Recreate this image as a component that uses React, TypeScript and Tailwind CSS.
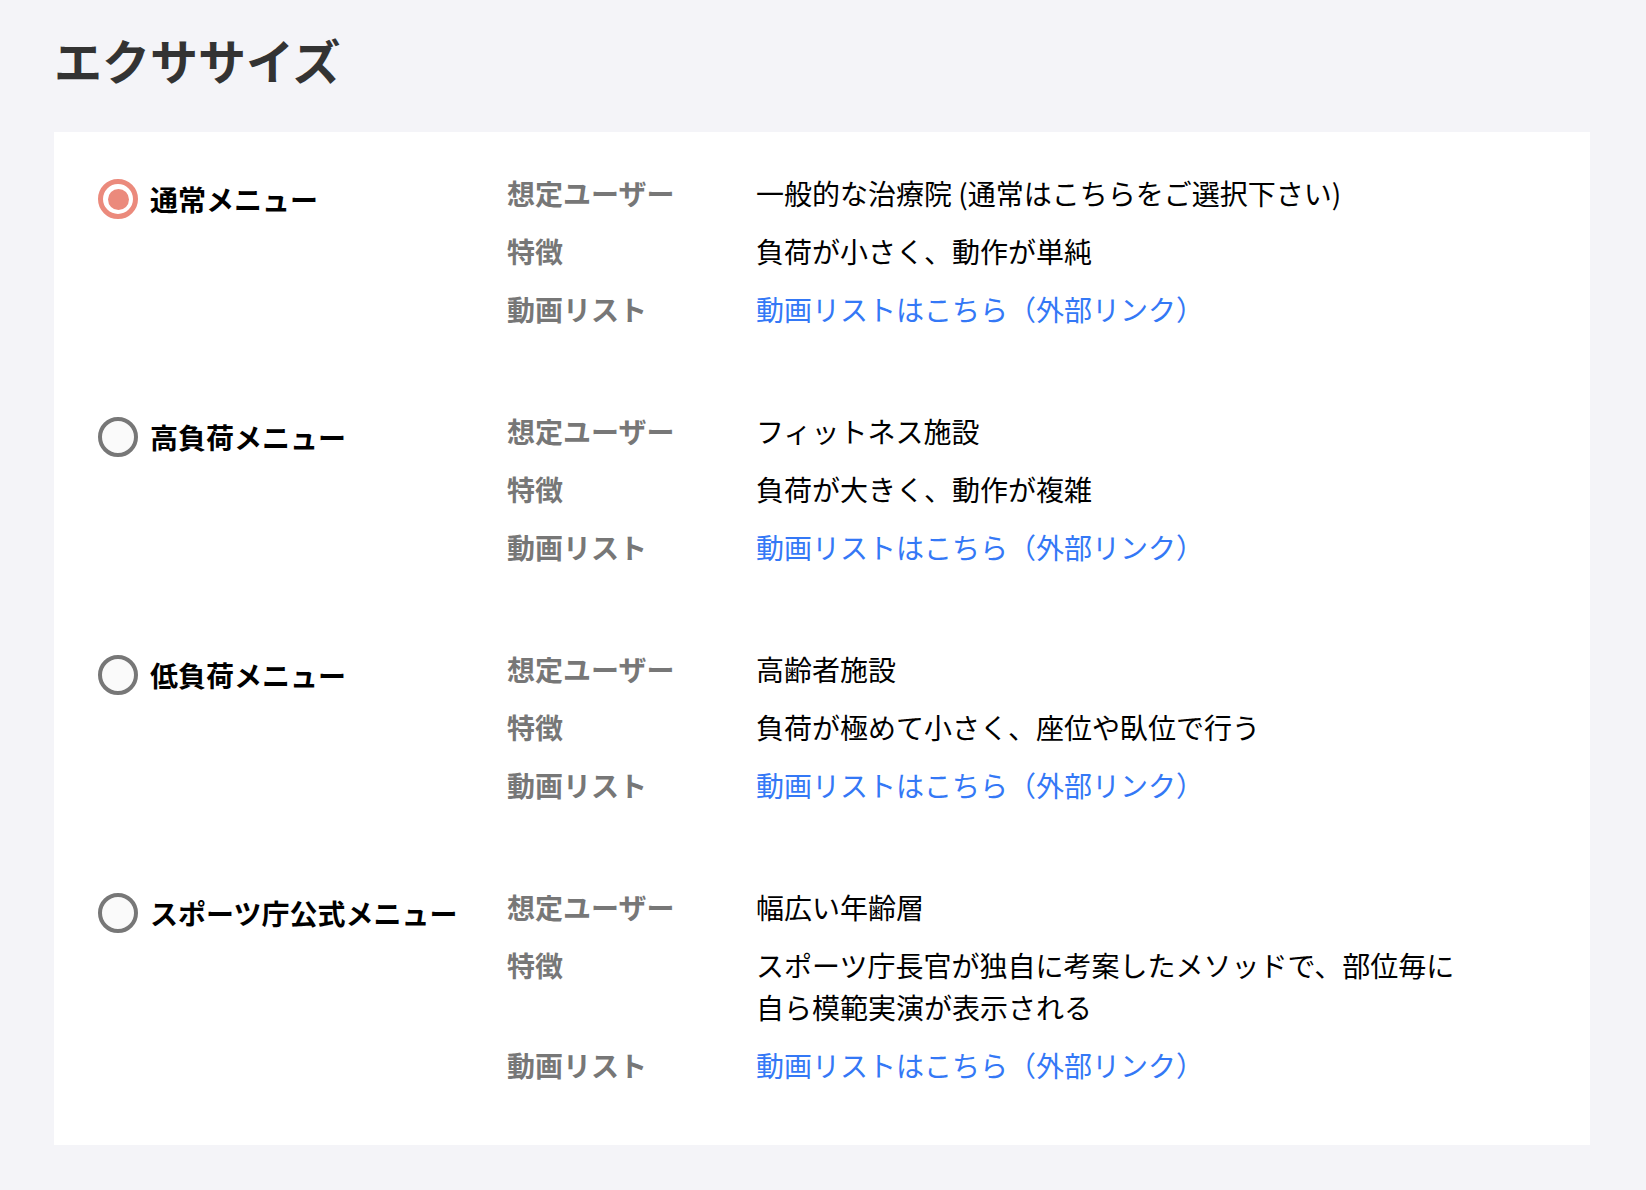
import React from "react";

type Menu = {
  name: string;
  selected: boolean;
  user: string;
  feature: string[];
};

const menus: Menu[] = [
  {
    name: "通常メニュー",
    selected: true,
    user: "一般的な治療院 (通常はこちらをご選択下さい)",
    feature: ["負荷が小さく、動作が単純"],
  },
  {
    name: "高負荷メニュー",
    selected: false,
    user: "フィットネス施設",
    feature: ["負荷が大きく、動作が複雑"],
  },
  {
    name: "低負荷メニュー",
    selected: false,
    user: "高齢者施設",
    feature: ["負荷が極めて小さく、座位や臥位で行う"],
  },
  {
    name: "スポーツ庁公式メニュー",
    selected: false,
    user: "幅広い年齢層",
    feature: ["スポーツ庁長官が独自に考案したメソッドで、部位毎に", "自ら模範実演が表示される"],
  },
];

function Radio({ selected }: { selected: boolean }) {
  if (selected) {
    return (
      <span className="flex h-[40px] w-[40px] shrink-0 items-center justify-center rounded-full border-[5px] border-[#eb8a7c] bg-white">
        <span className="block h-[21px] w-[21px] rounded-full bg-[#eb8a7c]" />
      </span>
    );
  }
  return <span className="block h-[40px] w-[40px] shrink-0 rounded-full border-[4px] border-[#777777] bg-[#fafafa]" />;
}

export default function App() {
  return (
    <div
      className="min-h-[1190px] w-full bg-[#f4f4f8] pt-[24px]"
      style={{ fontFamily: '"Noto Sans CJK JP", "Noto Sans", sans-serif' }}
    >
      <h1 className="ml-[54px] text-[48px] font-bold leading-[70px] text-[#333333]">エクササイズ</h1>
      <div className="ml-[54px] mt-[38px] flex w-[1536px] flex-col gap-[80px] bg-white pb-[59px] pl-[44px] pt-[40px]">
        {menus.map((m) => (
          <div key={m.name} className="flex">
            <label className="mt-[-1px] flex h-[42px] w-[409px] shrink-0 translate-y-[7px] items-center gap-[12px]">
              <Radio selected={m.selected} />
              <span className="text-[28px] font-bold leading-[42px] text-black">{m.name}</span>
            </label>
            <div className="flex flex-col gap-[16px] text-[28px] leading-[42px]">
              <div className="flex">
                <div className="w-[249px] shrink-0 font-bold text-[#777777]">想定ユーザー</div>
                <div className="w-[720px] text-black">{m.user}</div>
              </div>
              <div className="flex">
                <div className="w-[249px] shrink-0 font-bold text-[#777777]">特徴</div>
                <div className="w-[720px] text-black">
                  {m.feature.map((f) => (
                    <div key={f}>{f}</div>
                  ))}
                </div>
              </div>
              <div className="flex">
                <div className="w-[249px] shrink-0 font-bold text-[#777777]">動画リスト</div>
                <a href="#" className="text-[#3478f6]">
                  動画リストはこちら（外部リンク）
                </a>
              </div>
            </div>
          </div>
        ))}
      </div>
    </div>
  );
}
